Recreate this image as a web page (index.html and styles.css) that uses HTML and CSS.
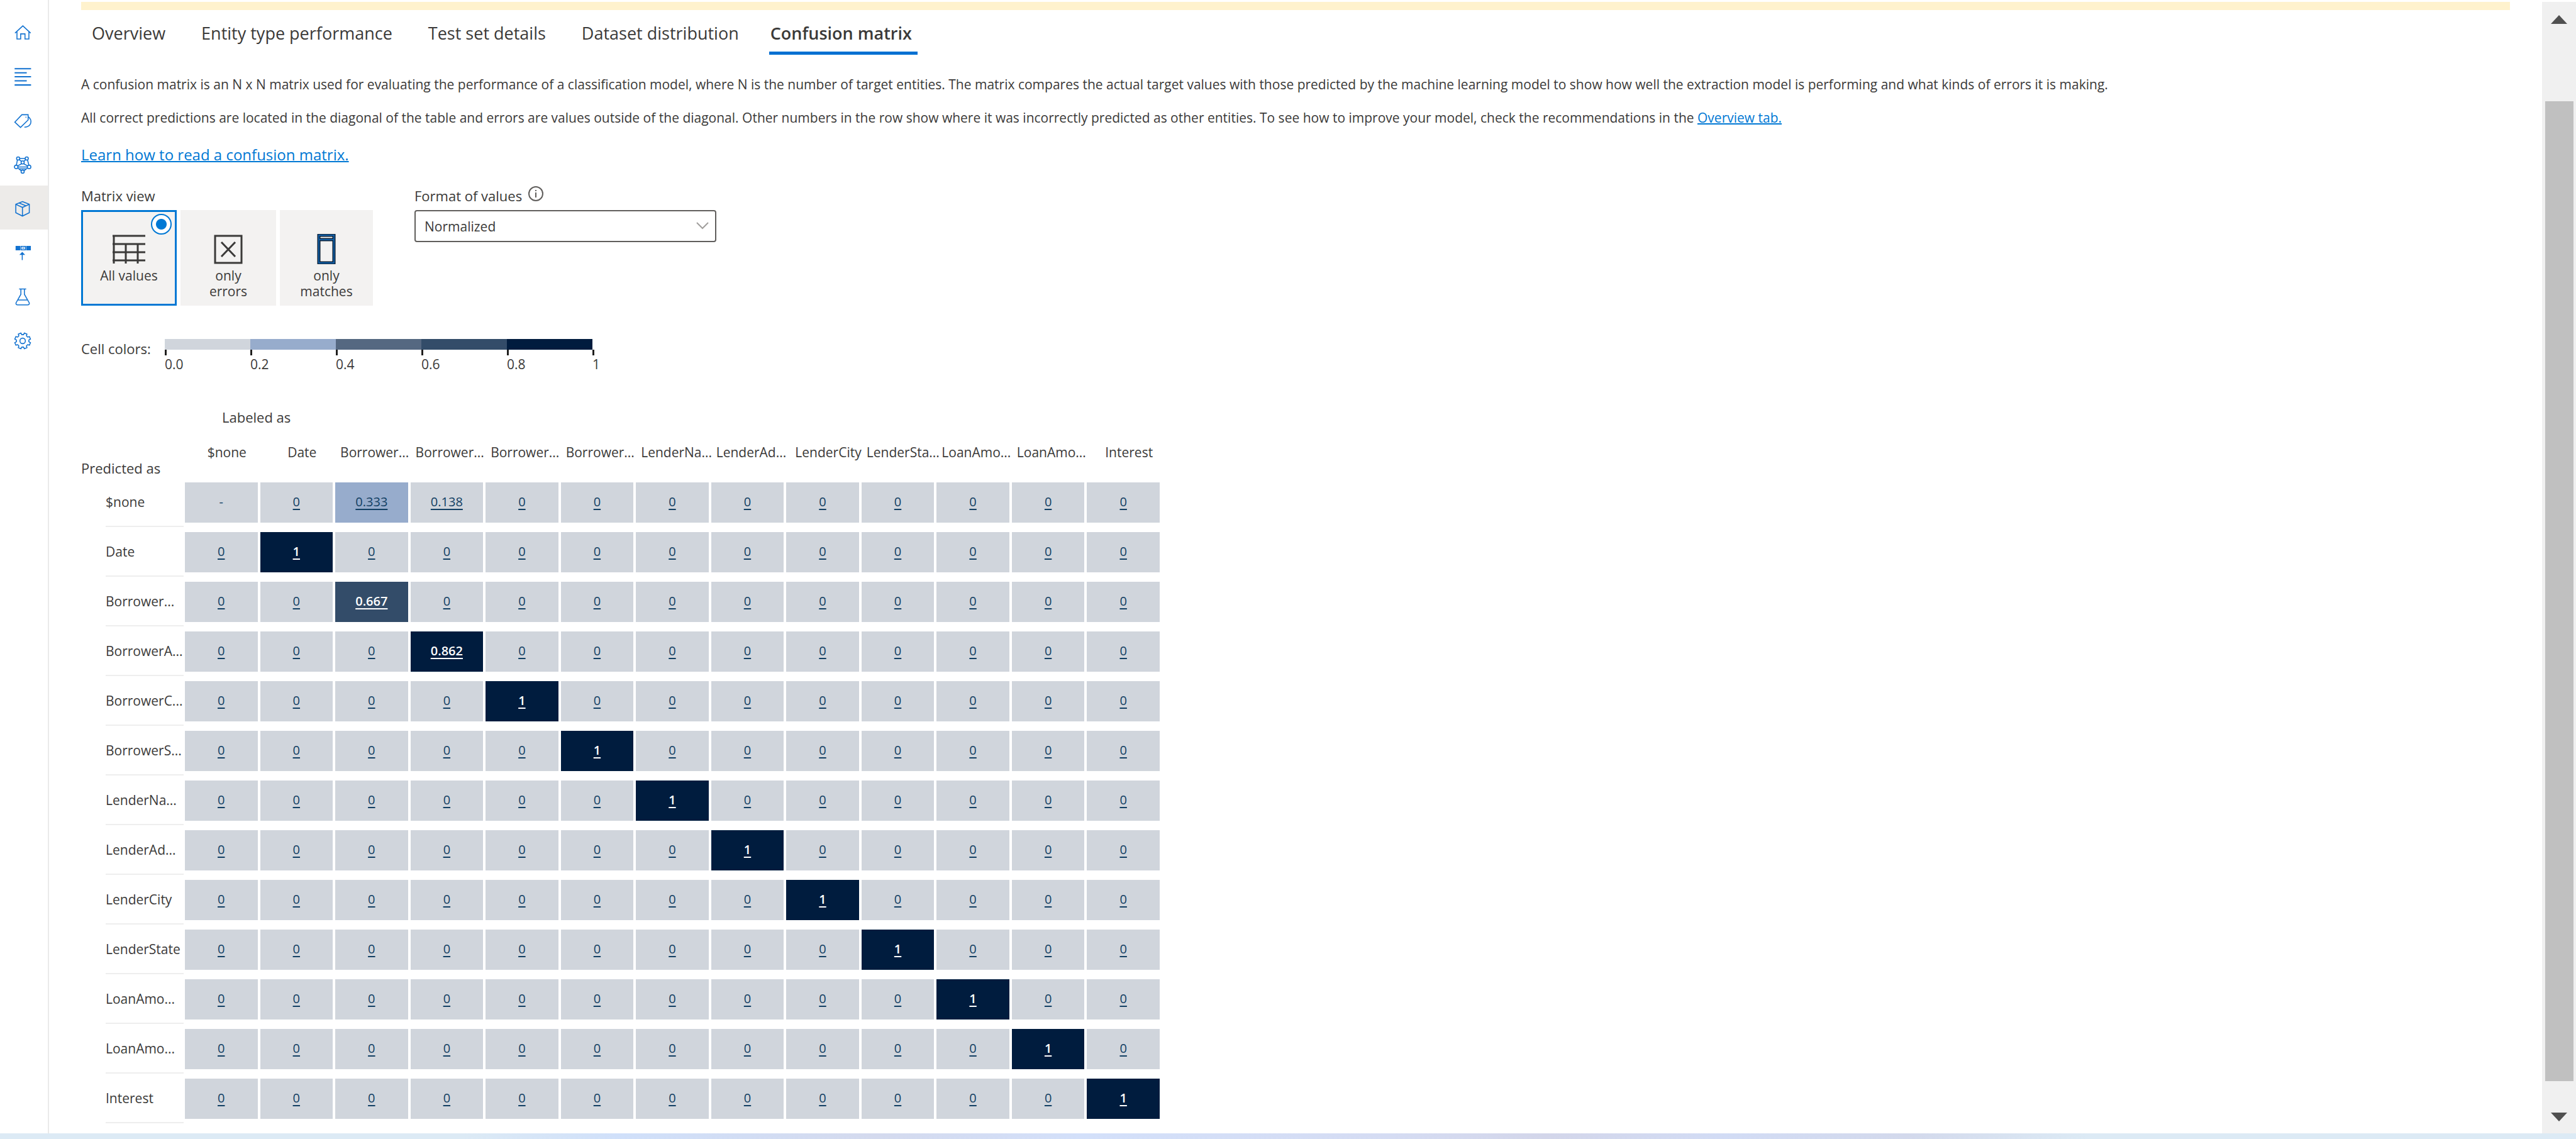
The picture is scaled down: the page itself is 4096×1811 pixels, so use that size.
FILE: index.html
```
<!DOCTYPE html>
<html lang="en">
<head>
<meta charset="utf-8">
<title>Confusion matrix</title>
<link rel="stylesheet" href="styles.css">
</head>
<body>
<div class="app">
  <nav class="sidebar" aria-label="Main">
    <a class="nav-item" href="#home" aria-label="Home"><svg viewBox="0 0 90 90"><path d="M6 47 46 10 86 47M16 40V77H35V51H57V77H77V40"/></svg></a>
    <a class="nav-item" href="#schema" aria-label="Schema definition"><svg viewBox="0 0 90 90"><path d="M4 4H88M4 25H66M4 45H88M4 66H66M4 87H88" stroke-width="7"/></svg></a>
    <a class="nav-item" href="#labeling" aria-label="Data labeling"><svg viewBox="0 0 90 90"><path d="M5 52 41 14H73V41L34 79ZM60 27H64M73 24Q92 38 86 59 79 78 54 78"/></svg></a>
    <a class="nav-item" href="#training" aria-label="Training jobs"><svg viewBox="0 0 90 90"><circle cx="22" cy="13" r="8"/><circle cx="66" cy="13" r="8"/><circle cx="12" cy="56" r="9"/><circle cx="78" cy="56" r="9"/><circle cx="45" cy="80" r="8"/><circle cx="45" cy="33" r="8"/><path d="M30 13H58M18 21 13 47M70 21 77 47M21 56H69M20 61 38 76M70 61 52 76M28 19 39 28M60 19 51 28M39 40 19 51M51 40 71 51M27 66H63"/></svg></a>
    <a class="nav-item nav-item-active" href="#performance" aria-label="Model performance"><svg viewBox="0 0 90 90"><path d="M44 8 79 22V65L44 82 10 65V22ZM10 22 44 38 79 22M44 38V82M27 15 62 30"/></svg></a>
    <a class="nav-item" href="#deploy" aria-label="Deploying a model"><svg viewBox="0 0 90 90"><path d="M9 10H33V32H9ZM63 10H87V32H63Z" fill="currentColor" stroke="none"/><path d="M37 12H59V30H37ZM44 21H52M43 45V82M34 53 43 44 52 53Z"/></svg></a>
    <a class="nav-item" href="#testing" aria-label="Testing deployments"><svg viewBox="0 0 90 90"><path d="M27 5H63M36 5V32L11 76Q10 86 19 86H71Q80 86 79 76L54 32V5M22 61H68"/></svg></a>
    <a class="nav-item" href="#settings" aria-label="Project settings"><svg viewBox="0 0 90 90"><g transform="translate(45 45)"><path d="M31.7 4.2 40 8.9 34.6 22 25.4 19.5 19.5 25.4 22 34.6 8.9 40 4.2 31.7-4.2 31.7-8.9 40-22 34.6-19.5 25.4-25.4 19.5-34.6 22-40 8.9-31.7 4.2-31.7-4.2-40-8.9-34.6-22-25.4-19.5-19.5-25.4-22-34.6-8.9-40-4.2-31.7 4.2-31.7 8.9-40 22-34.6 19.5-25.4 25.4-19.5 34.6-22 40-8.9 31.7-4.2Z"/><circle r="14"/></g></svg></a>
  </nav>

  <main class="main">
    <div class="banner"></div>
    <div class="tabs" role="tablist">
      <button class="tab" role="tab">Overview</button>
      <button class="tab" role="tab">Entity type performance</button>
      <button class="tab" role="tab">Test set details</button>
      <button class="tab" role="tab">Dataset distribution</button>
      <button class="tab tab-active" role="tab" aria-selected="true">Confusion matrix</button>
    </div>

    <div class="intro">
      <p>A confusion matrix is an N x N matrix used for evaluating the performance of a classification model, where N is the number of target entities. The matrix compares the actual target values with those predicted by the machine learning model to show how well the extraction model is performing and what kinds of errors it is making.</p>
      <p>All correct predictions are located in the diagonal of the table and errors are values outside of the diagonal. Other numbers in the row show where it was incorrectly predicted as other entities. To see how to improve your model, check the recommendations in the <a class="link" href="#overview">Overview tab.</a></p>
      <a class="link learn" href="#learn">Learn how to read a confusion matrix.</a>
    </div>

    <div class="controls">
      <fieldset class="view">
        <legend class="label">Matrix view</legend>
        <div class="cards">
          <label class="card">
            <input class="radio" type="radio" name="view" checked>
            <svg class="card-icon" viewBox="0 0 52 48"><path d="M0 3H52M0 16H52M0 29H52M0 42H52M2 2V47M21 16V47M40 16V47"/></svg>
            <span>All values</span>
          </label>
          <label class="card">
            <input class="radio" type="radio" name="view">
            <svg class="card-icon" viewBox="0 0 52 48"><path d="M5 3H47V46H5ZM15 13 37 36M37 13 15 36"/></svg>
            <span>only<br>errors</span>
          </label>
          <label class="card card-narrow">
            <input class="radio" type="radio" name="view">
            <svg class="card-icon" viewBox="0 0 52 48"><path d="M14 2H38V46H14ZM14 9H38" stroke="#0b2038" stroke-width="5"/><path d="M14 2H38V46H14ZM14 9H38" stroke="#0f5ea5" stroke-width="2"/></svg>
            <span>only<br>matches</span>
          </label>
        </div>
      </fieldset>
      <div class="format">
        <div class="label format-label">
          <label for="format">Format of values</label>
          <svg class="info" viewBox="0 0 24 24"><circle cx="12" cy="12" r="11"/><path d="M12 10V18M12 6V8"/></svg>
        </div>
        <div class="select-wrap">
          <select id="format" class="select"><option>Normalized</option></select>
          <svg class="chevron" viewBox="0 0 20 12"><path d="M1 1 10 10 19 1"/></svg>
        </div>
      </div>
    </div>

    <div class="legend">
      <span class="legend-title">Cell colors:</span>
      <div class="scale">
        <div class="step"><i class="swatch level-0"></i><span>0.0</span></div>
        <div class="step"><i class="swatch level-1"></i><span>0.2</span></div>
        <div class="step"><i class="swatch level-2"></i><span>0.4</span></div>
        <div class="step"><i class="swatch level-3"></i><span>0.6</span></div>
        <div class="step"><i class="swatch level-4"></i><span>0.8</span></div>
        <div class="step"><i class="swatch"></i><span>1</span></div>
      </div>
    </div>

    <table class="matrix">
      <thead>
        <tr><td class="corner"></td><th class="labeled" colspan="13">Labeled as</th></tr>
        <tr id="columns"><th class="predicted"><span>Predicted as</span></th></tr>
      </thead>
      <tbody id="rows"></tbody>
    </table>
  </main>

  <div class="scrollbar" aria-hidden="true">
    <svg class="arrow" viewBox="0 0 26 14"><path d="M0 14 13 0 26 14Z"/></svg>
    <div class="thumb"></div>
    <svg class="arrow" viewBox="0 0 26 14"><path d="M0 0 13 14 26 0Z"/></svg>
  </div>
</div>
<div class="taskbar"></div>
<script src="matrix.js"></script>
</body>
</html>
```
FILE: matrix.js
```
const columns = ['$none', 'Date', 'Borrower...', 'Borrower...', 'Borrower...', 'Borrower...', 'LenderNa...',
  'LenderAd...', 'LenderCity', 'LenderSta...', 'LoanAmo...', 'LoanAmo...', 'Interest'];
const rows = ['$none', 'Date', 'Borrower...', 'BorrowerA...', 'BorrowerC...', 'BorrowerS...', 'LenderNa...',
  'LenderAd...', 'LenderCity', 'LenderState', 'LoanAmo...', 'LoanAmo...', 'Interest'];
const diagonal = ['-', '1', '0.667', '0.862', '1', '1', '1', '1', '1', '1', '1', '1', '1'];
const errors = { '0,2': '0.333', '0,3': '0.138' };

// Five equal bands between 0 and 1, as in the legend.
const level = value => Math.min(4, Math.floor((parseFloat(value) || 0) * 5));

const head = document.getElementById('columns');
columns.forEach(name => {
  const th = document.createElement('th');
  th.scope = 'col';
  th.className = name.endsWith('...') ? 'col-name col-name-cut' : 'col-name';
  th.innerHTML = `<span>${name}</span>`;
  head.append(th);
});

const body = document.getElementById('rows');
rows.forEach((name, r) => {
  const tr = document.createElement('tr');
  tr.innerHTML = `<th class="row-name" scope="row"><div>${name}</div></th>` + columns.map((_, c) => {
    const value = r === c ? diagonal[r] : errors[r + ',' + c] || '0';
    const text = value === '-' ? value : `<a href="#cell">${value}</a>`;
    return `<td><div class="cell level-${level(value)}">${text}</div></td>`;
  }).join('');
  body.append(tr);
});
```
FILE: styles.css
```
* {
  box-sizing: border-box;
}

body {
  margin: 0;
  min-height: 100vh;
  display: flex;
  flex-direction: column;
  background: #fff;
  color: #3b3a39;
  font: 21px/28px "Open Sans", "Noto Sans", sans-serif;
}

svg {
  display: block;
  fill: none;
  stroke: currentColor;
}

p {
  margin: 0;
}

.app {
  flex: 1;
  display: flex;
}

/* Sidebar */
.sidebar {
  width: 78px;
  padding-top: 15px;
  border-right: 2px solid #eaeaea;
}

.nav-item {
  display: flex;
  align-items: center;
  justify-content: center;
  height: 70px;
  padding: 4px 4px 0 0;
  color: #1272d0;
}

.nav-item svg {
  width: 28px;
  height: 28px;
  overflow: visible;
  stroke-width: 5;
}

.nav-item-active {
  background: #edebe9;
}

/* Main column */
.main {
  flex: 1;
  padding: 3px 51px 8px 51px;
}

.banner {
  height: 13px;
  background: #fff2cd;
}

.tabs {
  display: flex;
  gap: 39px;
  padding-left: 8px;
}

.tab {
  height: 71px;
  padding: 2px 9px 0;
  border: 0;
  background: none;
  color: inherit;
  font: inherit;
  font-size: 27px;
}

.tab-active {
  padding: 7px 9px 0 2px;
  border-bottom: 5px solid #0070d2;
  font-weight: 600;
}

.intro {
  display: flex;
  flex-direction: column;
  align-items: flex-start;
  gap: 25px;
  margin-top: 33px;
}

.link {
  color: #0078d4;
  text-decoration: underline;
  text-decoration-thickness: 2px;
}

.learn {
  margin-top: 2px;
  font-size: 24px;
  line-height: 36px;
}

/* Controls */
.controls {
  display: flex;
  gap: 66px;
  margin-top: 32px;
}

.view {
  margin: 0;
  padding: 0;
  border: 0;
}

.label {
  padding: 0;
  margin-bottom: 8px;
  font-size: 22px;
  line-height: 30px;
}

.cards {
  display: flex;
  gap: 6px;
}

.card {
  position: relative;
  width: 152px;
  height: 152px;
  display: flex;
  flex-direction: column;
  align-items: center;
  padding-top: 35px;
  border: 3px solid #f3f2f1;
  background: #f3f2f1;
  line-height: 25px;
  text-align: center;
}

.card-narrow {
  width: 148px;
}

.card:has(:checked) {
  border-color: #0078d4;
}

.card-icon {
  width: 52px;
  height: 48px;
  margin-bottom: 6px;
  stroke-width: 3;
}

.radio {
  position: absolute;
  top: 3px;
  right: 5px;
  appearance: none;
  width: 33px;
  height: 33px;
  margin: 0;
  border-radius: 50%;
}

.radio:checked {
  border: 2px solid #0078d4;
  background: radial-gradient(circle, #0078d4 8px, #fff 9px);
}

.format {
  width: 480px;
}

.format-label {
  display: flex;
  align-items: flex-start;
  gap: 10px;
}

.info {
  width: 24px;
  height: 24px;
  color: #605e5c;
  stroke-width: 2;
}

.select-wrap {
  position: relative;
}

.select {
  width: 100%;
  height: 51px;
  padding: 0 14px;
  appearance: none;
  border: 2px solid #605e5c;
  border-radius: 4px;
  background: #fff;
  color: inherit;
  font: inherit;
}

.chevron {
  position: absolute;
  top: 19px;
  right: 12px;
  width: 20px;
  height: 12px;
  color: #a19f9d;
  stroke-width: 2;
  pointer-events: none;
}

/* Legend */
.legend {
  display: flex;
  gap: 22px;
  margin-top: 53px;
}

.legend-title {
  width: 111px;
  font-size: 22px;
  line-height: 30px;
  white-space: nowrap;
}

.scale {
  display: flex;
}

.step {
  display: flex;
  flex-direction: column;
  width: 136px;
}

.swatch {
  height: 17px;
}

.step span {
  order: 2;
}

.step::after {
  content: "";
  order: 1;
  width: 3px;
  height: 9px;
  background: #201f1e;
}

.level-0 { background: #d0d5dc; }
.level-1 { background: #97accc; }
.level-2 { background: #556881; }
.level-3 { background: #334c69; }
.level-4 { background: #001c3e; }

/* Matrix */
.matrix {
  width: 1678px;
  margin: 55px 0 0 39px;
  border-collapse: collapse;
  table-layout: fixed;
}

.matrix th,
.matrix td {
  padding: 0;
  font-weight: 400;
  vertical-align: top;
}

.corner {
  width: 124px;
}

.matrix .labeled {
  padding-left: 61px;
  font-size: 22px;
  line-height: 30px;
  text-align: left;
}

.matrix .predicted {
  height: 89px;
  padding-bottom: 8px;
  font-size: 22px;
  line-height: 30px;
  text-align: left;
  vertical-align: bottom;
  white-space: nowrap;
}

.predicted span {
  margin-left: -39px;
}

.matrix .col-name {
  padding-top: 27px;
  white-space: nowrap;
}

.col-name span {
  display: block;
  margin: 0 -8px 0 10px;
}

.matrix .col-name-cut {
  text-align: left;
}

.row-name div {
  height: 71px;
  margin-bottom: 8px;
  border-bottom: 2px solid #eeeeee;
  line-height: 62px;
  text-align: left;
  white-space: nowrap;
}

.cell {
  height: 64px;
  margin: 0 2px;
  color: #123f63;
  font-size: 20px;
  line-height: 62px;
  text-align: center;
}

.cell a {
  color: inherit;
  text-decoration: underline;
  text-decoration-thickness: 2px;
  text-underline-offset: 4px;
}

.cell.level-3,
.cell.level-4 {
  color: #fff;
  font-weight: 600;
}

/* Scrollbar and taskbar edge */
.scrollbar {
  width: 54px;
  display: flex;
  flex-direction: column;
  align-items: center;
  margin-top: 3px;
  padding: 21px 0 19px;
  background: #f0f0f0;
}

.arrow {
  width: 26px;
  height: 14px;
  fill: #505050;
  stroke: none;
}

.thumb {
  flex: 1;
  width: 45px;
  margin: 123px 0 50px;
  background: #c0c0c0;
}

.taskbar {
  height: 9px;
  background: linear-gradient(90deg, #dceaf5 18%, #d0e0fa 24%, #d4daee 34%, #d3e0fa 42%, #d5dcf3 54%, #d3d6ea 60%, #d2dcf5 67%, #d3d9ec 74%, #dceaf5 81%);
}
```
